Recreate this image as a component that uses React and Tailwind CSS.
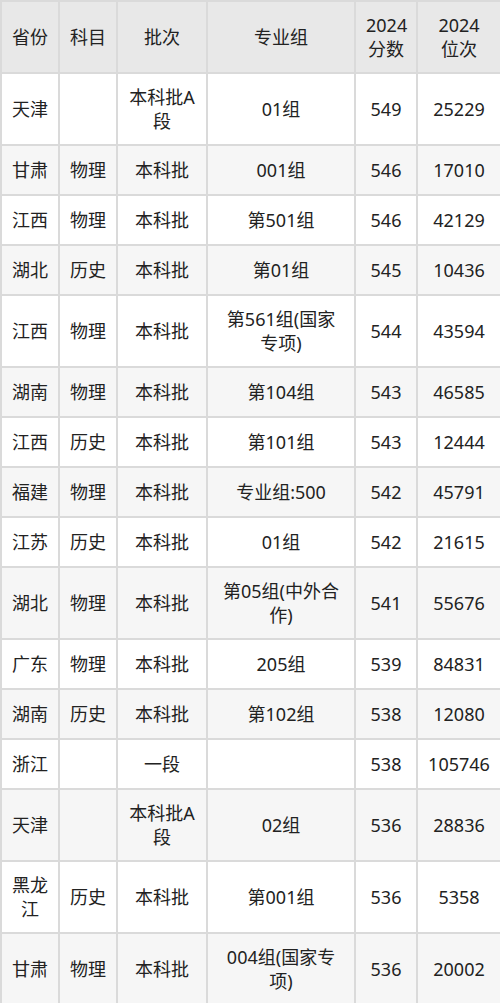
const rows = [
  ['天津', '', '本科批A段', '01组', '549', '25229'],
  ['甘肃', '物理', '本科批', '001组', '546', '17010'],
  ['江西', '物理', '本科批', '第501组', '546', '42129'],
  ['湖北', '历史', '本科批', '第01组', '545', '10436'],
  ['江西', '物理', '本科批', '第561组(国家专项)', '544', '43594'],
  ['湖南', '物理', '本科批', '第104组', '543', '46585'],
  ['江西', '历史', '本科批', '第101组', '543', '12444'],
  ['福建', '物理', '本科批', '专业组:500', '542', '45791'],
  ['江苏', '历史', '本科批', '01组', '542', '21615'],
  ['湖北', '物理', '本科批', '第05组(中外合作)', '541', '55676'],
  ['广东', '物理', '本科批', '205组', '539', '84831'],
  ['湖南', '历史', '本科批', '第102组', '538', '12080'],
  ['浙江', '', '一段', '', '538', '105746'],
  ['天津', '', '本科批A段', '02组', '536', '28836'],
  ['黑龙江', '历史', '本科批', '第001组', '536', '5358'],
  ['甘肃', '物理', '本科批', '004组(国家专项)', '536', '20002'],
]

const headers = ['省份', '科目', '批次', '专业组', '2024 分数', '2024 位次']

export default function App() {
  return (
    <div
      className="w-[500px] bg-white text-[18px] leading-[24px] text-[#222]"
      style={{ fontFamily: '"Noto Sans", "Noto Sans CJK SC", sans-serif' }}
    >
      <table className="w-[500px] table-fixed border-collapse border-2 border-[#dadada]">
        <colgroup>
          <col className="w-[58px]" />
          <col className="w-[58px]" />
          <col className="w-[90px]" />
          <col className="w-[148px]" />
          <col className="w-[62px]" />
          <col className="w-[84px]" />
        </colgroup>
        <thead>
          <tr className="h-[72px] bg-[#e8e8e8]">
            {headers.map((h, i) => (
              <th
                key={i}
                className={`border-2 border-[#dadada] px-[10px] text-center font-normal ${i > 3 ? 'px-[8px]' : ''}`}
              >
                {h}
              </th>
            ))}
          </tr>
        </thead>
        <tbody>
          {rows.map((r, ri) => (
            <tr key={ri} className={ri % 2 === 1 ? 'bg-[#f6f6f6]' : 'bg-white'}>
              {r.map((c, ci) => (
                <td
                  key={ci}
                  className="h-[50px] border-2 border-[#dadada] px-[10px] py-[11px] text-center break-all"
                >
                  {c}
                </td>
              ))}
            </tr>
          ))}
        </tbody>
      </table>
    </div>
  )
}
